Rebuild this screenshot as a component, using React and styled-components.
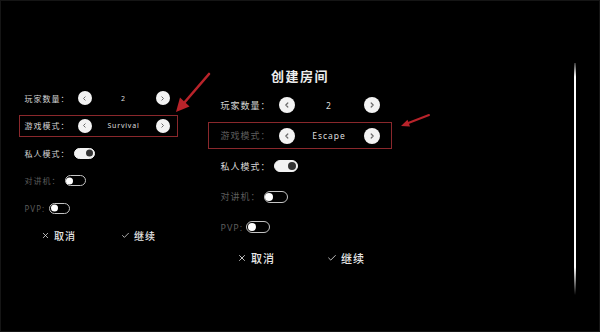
import React from 'react';
import styled, { createGlobalStyle } from 'styled-components';
import { X, Check } from 'lucide-react';

const Global = createGlobalStyle`
  html, body {
    margin: 0;
    background: #000;
  }
  body {
    font-family: "Noto Sans", "Noto Sans CJK SC", sans-serif;
  }
`;

const Screen = styled.div`
  position: relative;
  width: 600px;
  height: 332px;
  display: flex;
  align-items: flex-start;
  background: #000;
  overflow: hidden;
  box-shadow: inset 0 0 0 1px #151515;
`;

const Panel = styled.div`
  display: flex;
  flex-direction: column;
  gap: ${(p) => (p.$big ? '3.6px' : '5.6px')};
  width: ${(p) => (p.$big ? 184 : 159)}px;
  margin-top: ${(p) => (p.$big ? 68 : 87)}px;
  margin-left: ${(p) => (p.$big ? 30 : 19)}px;
`;

const Title = styled.div`
  height: 16px;
  line-height: 16px;
  margin-bottom: 4px;
  text-align: center;
  font-size: 13px;
  font-weight: 700;
  letter-spacing: 1.5px;
  color: #ececec;
`;

const Row = styled.div`
  box-sizing: border-box;
  height: ${(p) => (p.$big ? 27 : 22)}px;
  display: flex;
  align-items: center;
  gap: ${(p) => (p.$big ? 3 : 4)}px;
  padding-left: ${(p) => (p.$big ? 11.5 : 4.5)}px;
  border: 1.5px solid ${(p) => (p.$marked ? '#8a282c' : 'transparent')};
`;

const SelectRow = styled(Row)`
  display: grid;
  grid-template-columns: ${(p) => (p.$big ? '58px 16px 1fr 16px' : '53px 14px 1fr 14px')};
  gap: 0;
  padding-right: ${(p) => (p.$big ? 11.5 : 7.5)}px;
`;

const Label = styled.span`
  font-size: ${(p) => (p.$big ? 9 : 8)}px;
  letter-spacing: 1px;
  white-space: nowrap;
  color: ${(p) => (p.$dim ? '#5c5c5c' : '#d6d6d6')};
`;

const Value = styled.span`
  text-align: center;
  font-size: ${(p) => (p.$big ? 8.5 : 7)}px;
  letter-spacing: ${(p) => (p.$big ? 1 : 0.8)}px;
  color: #dedede;
`;

const ArrowBtn = styled.div`
  width: ${(p) => (p.$big ? 16 : 14)}px;
  height: ${(p) => (p.$big ? 16 : 14)}px;
  border-radius: 50%;
  background: #f3f3f3;
  display: grid;
  place-items: center;
`;

const Toggle = styled.div`
  position: relative;
  box-sizing: border-box;
  width: ${(p) => (p.$big ? 24 : 21)}px;
  height: ${(p) => (p.$big ? 12 : 11)}px;
  border-radius: 99px;
  background: ${(p) => (p.$on ? '#f2f2f2' : '#000')};
  border: 1.5px solid ${(p) => (p.$on ? '#f2f2f2' : '#c4c4c4')};

  &::after {
    content: '';
    position: absolute;
    top: 50%;
    transform: translateY(-50%);
    width: ${(p) => (p.$big ? 8 : 7)}px;
    height: ${(p) => (p.$big ? 8 : 7)}px;
    border-radius: 50%;
    background: ${(p) => (p.$on ? '#333' : '#fff')};
    ${(p) => (p.$on ? 'right: 0.5px;' : 'left: 0.5px;')}
  }
`;

const Actions = styled.div`
  height: ${(p) => (p.$big ? 27 : 22)}px;
  display: flex;
  align-items: center;
  gap: ${(p) => (p.$big ? 52 : 45)}px;
  padding-left: ${(p) => (p.$big ? 29 : 22)}px;
`;

const Action = styled.span`
  display: flex;
  align-items: center;
  gap: 4px;
  font-size: ${(p) => (p.$big ? 11 : 10)}px;
  font-weight: 500;
  letter-spacing: 1px;
  color: #e6e6e6;
`;

const EdgeLine = styled.div`
  width: 2px;
  height: 232px;
  margin-top: 63px;
  margin-left: auto;
  margin-right: 24px;
  background: linear-gradient(to bottom, rgba(255,255,255,0.2), #fff 6%, #fff 88%, rgba(255,255,255,0));
`;

const Overlay = styled.svg`
  position: absolute;
  inset: 0;
  pointer-events: none;
`;

const Chevron = ({ dir, big }) => {
  const s = big ? 6 : 5;
  return (
    <svg width={s} height={s} viewBox="0 0 6 6">
      <path
        d={dir === 'left' ? 'M3.8 1 L1.8 3 L3.8 5' : 'M2.2 1 L4.2 3 L2.2 5'}
        fill="none"
        stroke="#6a6a6a"
        strokeWidth="1.2"
        strokeLinecap="round"
        strokeLinejoin="round"
      />
    </svg>
  );
};

const Selector = ({ big, label, value, marked, dim }) => (
  <SelectRow $big={big} $marked={marked}>
    <Label $big={big} $dim={dim}>{label}</Label>
    <ArrowBtn $big={big}><Chevron dir="left" big={big} /></ArrowBtn>
    <Value $big={big}>{value}</Value>
    <ArrowBtn $big={big}><Chevron dir="right" big={big} /></ArrowBtn>
  </SelectRow>
);

const Switch = ({ big, label, on, dim }) => (
  <Row $big={big}>
    <Label $big={big} $dim={dim}>{label}</Label>
    <Toggle $big={big} $on={on} />
  </Row>
);

const RoomPanel = ({ big, mode, modeDim }) => (
  <Panel $big={big}>
    {big && <Title>创建房间</Title>}
    <Selector big={big} label="玩家数量：" value="2" />
    <Selector big={big} label="游戏模式：" value={mode} marked dim={modeDim} />
    <Switch big={big} label="私人模式：" on />
    <Switch big={big} label="对讲机：" dim />
    <Switch big={big} label="PVP:" dim />
    <Actions $big={big}>
      <Action $big={big}><X size={big ? 10 : 9} strokeWidth={2} />取消</Action>
      <Action $big={big}><Check size={big ? 10 : 9} strokeWidth={2} />继续</Action>
    </Actions>
  </Panel>
);

const App = () => (
  <>
    <Global />
    <Screen>
      <RoomPanel mode="Survival" />
      <RoomPanel big mode="Escape" modeDim />
      <EdgeLine />
      <Overlay width="600" height="332" viewBox="0 0 600 332">
        <line x1="209" y1="74" x2="184" y2="103" stroke="#b8232a" strokeWidth="2.6" strokeLinecap="round" />
        <polygon points="176,112 189.5,106.5 180,97.5" fill="#b8232a" />
        <line x1="429" y1="115" x2="407" y2="123.5" stroke="#b8232a" strokeWidth="2" strokeLinecap="round" />
        <polygon points="401,126 410,126.5 407.5,119.8" fill="#b8232a" />
      </Overlay>
    </Screen>
  </>
);

export default App;
